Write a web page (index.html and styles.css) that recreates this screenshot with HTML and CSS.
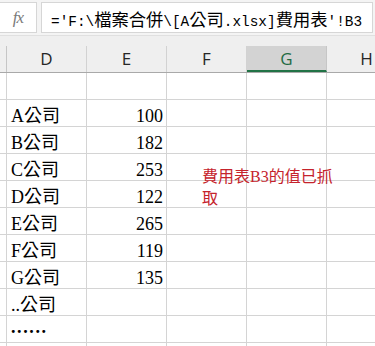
FILE: index.html
```html
<!DOCTYPE html>
<html lang="zh-Hant">
<head>
  <meta charset="UTF-8" />
  <meta name="viewport" content="width=device-width, initial-scale=1.0"/>
  <title>費用表</title>
  <link rel="stylesheet" href="styles.css">
</head>
<body>
<div class="formula-bar">
  <div class="fx">fx</div>
  <div class="formula">='F:\<span class="cj">檔案合併</span>\[A<span class="cj">公司</span>.xlsx]<span class="cj">費用表</span>'!B3</div>
</div>

<div class="col-heads">
  <div class="head stub"></div>
  <div class="head">D</div>
  <div class="head">E</div>
  <div class="head">F</div>
  <div class="head sel">G</div>
  <div class="head">H</div>
</div>

<div class="sheet">
  <div class="row"><div class="cell stub"></div><div class="cell"></div><div class="cell num"></div><div class="cell"></div><div class="cell"></div><div class="cell"></div></div>
  <div class="row"><div class="cell stub"></div><div class="cell">A公司</div><div class="cell num">100</div><div class="cell"></div><div class="cell"></div><div class="cell"></div></div>
  <div class="row"><div class="cell stub"></div><div class="cell">B公司</div><div class="cell num">182</div><div class="cell"></div><div class="cell"></div><div class="cell"></div></div>
  <div class="row"><div class="cell stub"></div><div class="cell">C公司</div><div class="cell num">253</div><div class="cell"></div><div class="cell"></div><div class="cell"></div></div>
  <div class="row"><div class="cell stub"></div><div class="cell">D公司</div><div class="cell num">122</div><div class="cell"></div><div class="cell"></div><div class="cell"></div></div>
  <div class="row"><div class="cell stub"></div><div class="cell">E公司</div><div class="cell num">265</div><div class="cell"></div><div class="cell"></div><div class="cell"></div></div>
  <div class="row"><div class="cell stub"></div><div class="cell">F公司</div><div class="cell num">119</div><div class="cell"></div><div class="cell"></div><div class="cell"></div></div>
  <div class="row"><div class="cell stub"></div><div class="cell">G公司</div><div class="cell num">135</div><div class="cell"></div><div class="cell"></div><div class="cell"></div></div>
  <div class="row"><div class="cell stub"></div><div class="cell">..公司</div><div class="cell num"></div><div class="cell"></div><div class="cell"></div><div class="cell"></div></div>
  <div class="row"><div class="cell stub"></div><div class="cell"><span class="dots">......</span></div><div class="cell num"></div><div class="cell"></div><div class="cell"></div><div class="cell"></div></div>
  <div class="row"><div class="cell stub"></div><div class="cell"></div><div class="cell num"></div><div class="cell"></div><div class="cell"></div><div class="cell"></div></div>

  <div class="note">費用表B3的值已抓取</div>
</div>
</body>
</html>
```

FILE: styles.css
```css
* {
  margin: 0;
  padding: 0;
  box-sizing: border-box;
}

body {
  width: 375px;
  height: 346px;
  overflow: hidden;
  background: #fff;
  font-family: 'Liberation Serif', 'Noto Sans CJK TC', serif;
  color: #000;
}

.formula-bar {
  display: flex;
  gap: 4px;
  height: 36px;
  padding: 2px 2px 2px 0;
  background: #f4f4f4;
  border-bottom: 1px solid #e0e0e0;
}

.fx {
  width: 37px;
  background: #fff;
  border: 1px solid #d6d6d6;
  border-left: none;
  font-family: 'Liberation Serif', serif;
  font-style: italic;
  font-size: 17px;
  color: #7a7a7a;
  text-align: center;
  line-height: 30px;
  letter-spacing: -1px;
}

.formula {
  flex: 1;
  background: #fff;
  border: 1px solid #d6d6d6;
  padding-left: 9px;
  font-family: 'Liberation Mono', 'Noto Sans CJK TC', monospace;
  font-size: 14.4px;
  line-height: 32px;
  white-space: nowrap;
  overflow: hidden;
}

.formula .cj {
  font-family: 'Noto Sans CJK TC', sans-serif;
  font-size: 17.3px;
}

.col-heads {
  display: flex;
  height: 37px;
  padding-top: 10px;
  background: #efefef;
  border-bottom: 1px solid #a9a9a9;
}

.head {
  flex: 0 0 80px;
  border-right: 1px solid #d2d2d2;
  font-family: 'Open Sans', sans-serif;
  font-size: 17px;
  color: #262626;
  text-align: center;
  line-height: 26px;
}

.head.stub {
  flex-basis: 7px;
  border-right-color: #c6c6c6;
}

.head.sel {
  background: #d3d3d3;
  color: #1f6b43;
  border-bottom: 2px solid #217346;
  border-right-color: #c6c6c6;
}

.sheet {
  position: relative;
}

.row {
  display: flex;
  height: 27px;
  border-bottom: 1px solid #d4d4d4;
}

.cell {
  flex: 0 0 80px;
  border-right: 1px solid #d4d4d4;
  padding: 6px 3px 0 4px;
  font-size: 18px;
  line-height: 20px;
  white-space: nowrap;
}

.cell.stub {
  flex-basis: 7px;
  padding: 0;
}

.cell.num {
  text-align: right;
}

.dots {
  display: inline-block;
  font-weight: bold;
  letter-spacing: 1.6px;
  transform: translateY(-5px);
}

.note {
  position: absolute;
  left: 202px;
  top: 93px;
  width: 140px;
  font-size: 16px;
  line-height: 22px;
  color: #c5232c;
}
```
